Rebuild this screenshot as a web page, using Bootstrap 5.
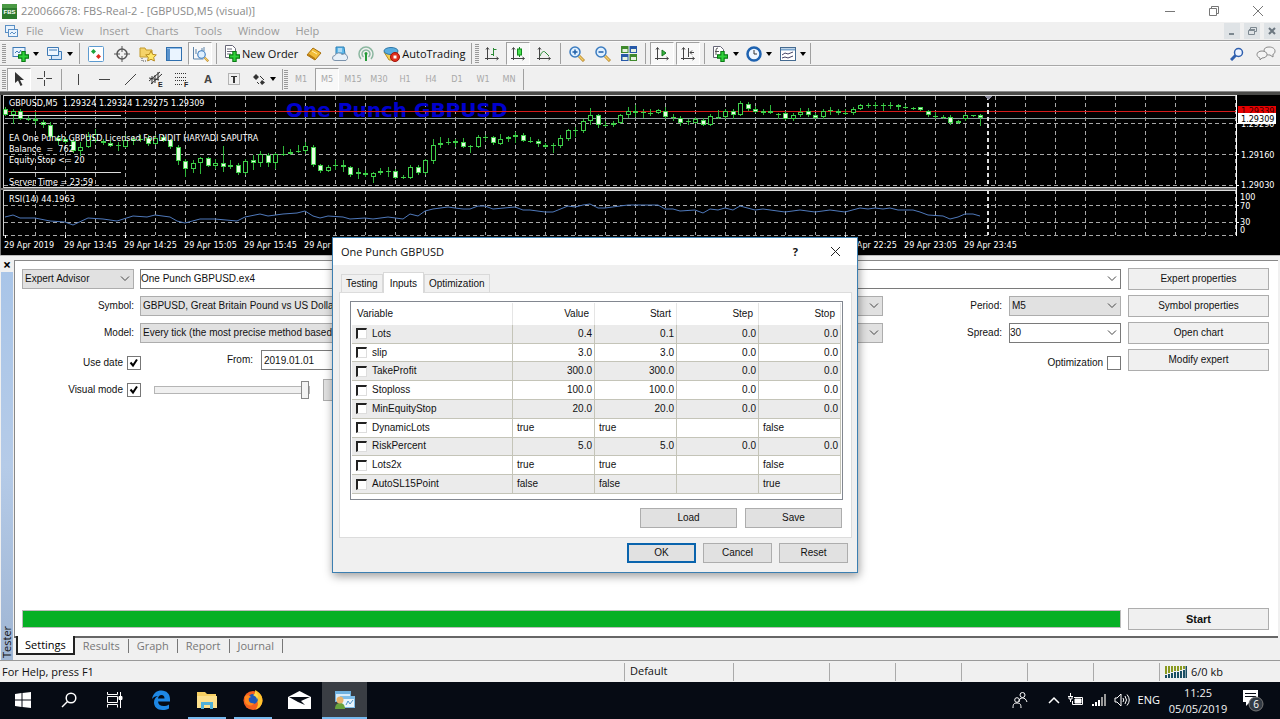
<!DOCTYPE html>
<html lang="en">
<head>
<meta charset="utf-8">
<meta name="viewport" content="width=device-width, initial-scale=1">
<title>FBS-Real-2 - GBPUSD,M5</title>
<link href="https://cdn.jsdelivr.net/npm/bootstrap@5.3.0/dist/css/bootstrap.min.css" rel="stylesheet">
<style>
:root{--ui:"Open Sans","Noto Sans",sans-serif;--form:"Liberation Sans",Arial,sans-serif}
body{font-family:var(--ui);font-size:11px;line-height:16px;color:#111;background:#f0f0f0;min-height:100vh;overflow:hidden}
button,select,input{font:inherit;color:inherit}
button{border:0;background:none;padding:0}
svg{display:block;flex:none}
.gap-s{gap:5px}
.gap-m{gap:6px}
.gap-l{gap:7px}
.shrinkable{min-width:0}
.titlebar{height:22px;background:#fff;color:#8a8a8a;padding-left:2px}
.menubar{height:19px;border-bottom:1px solid #a0a0a0}
.menubar a{color:#9a9a9a;text-decoration:none;padding:0 8px}
.mdi button{width:16px;height:16px;background:#dfe3e6;color:#7d8890}
.toolrow{height:25px;border-bottom:1px solid #a8a8a8;border-top:1px solid #fafafa}
.toolrow.last{height:26px;border-bottom:1px solid #8a8a8a}
.tool{width:26px;height:23px;display:flex;align-items:center;justify-content:center;flex:none}
.tool.drop{width:34px;gap:4px}
.tool.drop::after{content:"";border:3px solid transparent;border-top:4px solid #000;border-bottom:0}
.tool.wide{width:auto;gap:2px;padding:0 3px 0 4px}
.tool.letter{font-weight:700;color:#444}
.tool.on{width:24px;margin:0 1px;background:#f8f8f8;border:1px solid #a0a0a0;border-right-color:#fff;border-bottom-color:#fff}
.rule{width:1px;height:21px;background:#a0a0a0;margin:0 3px;flex:none}
.grip{width:4px;height:19px;margin:0 2px;flex:none;background:repeating-linear-gradient(#999 0 1px,#f0f0f0 1px 2px)}
.rule.tight{margin:0 1px}
.rule+.grip{margin:0}
.period{color:#a8a8a8;font-size:9px;font-family:"DejaVu Sans Condensed","DejaVu Sans",sans-serif}
.chart{height:164px;background:#000;border-bottom:1px solid #bbb}
.chart text{font-family:"DejaVu Sans Condensed","DejaVu Sans",sans-serif;font-size:9px;fill:#fff}
.chart .ea-name{font-family:"DejaVu Sans",sans-serif;font-weight:700;font-size:20px;fill:#0000cd}
.chart .on-red{fill:#300}
.chart .on-white{fill:#000}
.side{width:14px;padding:2px 1px 0}
.side .closer{height:14px;font-weight:700;font-size:14px;line-height:12px;color:#000}
.side .strip{background:linear-gradient(#9fb5d3,#b5cbe8 50%,#a9c5e8);writing-mode:vertical-rl;transform:rotate(180deg);line-height:12px;padding-top:2px;font-size:11px}
.pane{background:#fff;border-top:1px solid #888;border-left:1px solid #888;margin:4px 2px 0 0;padding:7px 9px 6px 7px;font-family:var(--form);font-size:10px}
.pane label{white-space:nowrap}
.pane-row{height:22px}
.pane-row.low,.pane-row .low{padding-top:5px}
.pane select,.pane .date{height:20px;border:1px solid #7a7a7a;border-radius:0;padding:0 2px;min-width:0}
.pane select{appearance:none;border-color:#adadad;background:#e1e1e1 url("data:image/svg+xml,%3Csvg xmlns='http://www.w3.org/2000/svg' width='10' height='6'%3E%3Cpath d='M1 .5l4 4 4-4' fill='none' stroke='%23444'/%3E%3C/svg%3E") no-repeat right 3px center}
.pane select.edit{border-color:#7a7a7a;background-color:#fff;padding-left:0}
.w-lab{width:112px;flex:none}
.w-check{width:119px}
.w-right{width:238px;margin-left:-6px;flex:none}
.date{width:90px}
.tick{appearance:none;width:14px;height:14px;border:1px solid #777;background:#fff;margin:0;flex:none}
.tick:checked{background:#fff url("data:image/svg+xml,%3Csvg xmlns='http://www.w3.org/2000/svg' width='12' height='12'%3E%3Cpath d='M2.500 5.500l2.500 3 4-6' fill='none' stroke='%23000' stroke-width='2'/%3E%3C/svg%3E") center no-repeat}
.speed{appearance:none;width:156px;height:20px;background:none;margin:0 13px}
.speed::-webkit-slider-runnable-track{height:8px;border:1px solid #b5b5b5;background:#f0f0f0}
.speed::-webkit-slider-thumb{appearance:none;width:8px;height:18px;margin-top:-6px;background:#f4f4f4;border:1px solid #888}
.push{height:22px;border:1px solid #adadad;background:#f0f0f0;text-align:center}
.push.pause{width:40px;flex:none;background:#e1e1e1}
.pushes{width:141px}
.progress{--bs-progress-height:18px;--bs-progress-border-radius:0;--bs-progress-bg:#e6e6e6;--bs-progress-bar-bg:#06b025;border:1px solid #bcbcbc}
.start{font-weight:700;font-size:11px}
.tabs{border-top:2px solid #666;height:24px;margin-right:2px}
.tabs button{color:#777;height:14px;padding:0 8px;line-height:12px;border-right:1px solid #777;margin-top:1px}
.tabs button.sel{background:#fff;color:#000;height:19px;line-height:18px;border:2px solid #222;border-top:0;margin:-2px 0 0 2px;padding:0 7px}
.statusbar{height:22px;border-top:1px solid #999}
.statusbar .hint{padding-left:2px;width:0}
.statusbar .cell{height:18px;border-left:1px solid #aaa;padding-left:5px;flex:none;white-space:nowrap;width:66px}
.statusbar .profile{width:109px}
.statusbar .when{width:96px}
.statusbar .traffic{width:121px;gap:4px}
.taskbar{height:37px;background:#060b14;color:#f2f2f2}
.taskbar button{height:37px;width:46px;display:flex;align-items:center;justify-content:center;flex:none;color:#fff;border-bottom:2px solid transparent}
.taskbar button.run{width:38px;margin:0 4px;border-color:#76b9ed}
.taskbar button.cur{width:45px;background:#3a3e44;border-color:#76b9ed}
.taskbar .tray button{width:auto}
.clock{width:68px;line-height:16px;text-align:center}
.dialog{position:absolute;left:332px;top:237px;width:526px;background:#f0f0f0;border:1px solid #3c7fb1;box-shadow:1px 3px 9px rgba(0,0,0,.4);font-family:var(--form);font-size:10px;z-index:5}
.dlg-title{height:27px;background:#fff;font-family:var(--ui);font-size:11px;padding:0 16px 0 8px}
.dlg-tabs{padding:7px 0 0 8px}
.dlg-tabs button{height:18px;border:1px solid #d9d9d9;border-bottom:0;padding:0 4px;line-height:16px}
.dlg-tabs button.sel{height:21px;background:#fff;margin-bottom:-1px;padding:0 6px;line-height:19px}
.sheet{margin:0 5px 0 6px;background:#fff;border:1px solid #dcdcdc;padding:8px 8px 9px 10px}
.sheet .files{margin-top:8px;padding-right:1px}
.gridbox{border:1px solid #828790;padding:1px 1px 5px;height:199px}
.vars{width:100%;height:191px;table-layout:fixed;border-collapse:collapse;line-height:14px}
.vars .c-num{width:82px}
.vars th{font-weight:400;height:22px;text-align:right;padding:0 5px;border-right:1px solid #e5e5e5}
.vars td{border-right:1px solid #c4c4b8;border-bottom:1px solid #c4c4b8;padding:0 3px 0 4px}
.vars tbody tr:nth-child(odd){background:#ebebeb}
.vars .num{text-align:right;padding-right:2px}
.vars .opt{appearance:none;width:11px;height:11px;margin:0;border:1px solid #ddd;border-top:2px solid #222;border-left:2px solid #222;background:#fff}
.dialog .push{height:20px;background:#e1e1e1;line-height:18px;width:69px}
.dialog .files .push{width:97px}
.dialog .push.ok{border:2px solid #0a64ad;line-height:16px}
.dlg-foot{padding:5px 9px 9px}
</style>
</head>
<body class="d-flex flex-column">

<svg width="0" height="0" class="position-absolute" aria-hidden="true">
 <defs>
  <symbol id="plus" viewBox="0 0 10 10"><path d="M3.500.5h3v3h3v3h-3v3h-3v-3h-3v-3h3z" fill="#2fd23a" stroke="#0a7a14"/></symbol>
  <symbol id="axes" viewBox="0 0 16 16"><path d="M3.500 2v12M1 12.500h13M2 3.500l1.500-2 1.500 2M12.500 11l2 1.500-2 1.500" fill="none" stroke="#444"/></symbol>
  <symbol id="lens" viewBox="0 0 16 16"><path d="M10 10l5 5" stroke="#b8862b" stroke-width="3"/><path d="M10 10l4.500 4.500" stroke="#f3cf6b" stroke-width="1.500"/><circle cx="6" cy="6" r="5" fill="#dff0ff" stroke="#3c7cc0" stroke-width="1.500"/></symbol>
 </defs>
</svg>

<header class="titlebar d-flex align-items-center">
 <svg class="me-1" width="15" height="15" viewBox="0 0 15 15"><rect width="15" height="15" fill="#2c7a2e"/><path d="M0 0h15v4H0z" fill="#4b9a45"/><text x="7.500" y="10" font-size="6" font-weight="700" fill="#fff" text-anchor="middle" font-family="Liberation Sans">FBS</text></svg>
 <span>220066678: FBS-Real-2 - [GBPUSD,M5 (visual)]</span>
 <div class="ms-auto d-flex gap-4 align-items-center pe-3">
  <button aria-label="Minimize" class="me-2"><svg width="12" height="12"><path d="M1 6.500h10" stroke="#777"/></svg></button>
  <button aria-label="Restore" class="me-2"><svg width="12" height="12" fill="none" stroke="#777"><path d="M1.500 3.500h7v7h-7zM3.500 3.500v-2h7v7h-2"/></svg></button>
  <button aria-label="Close"><svg width="12" height="12"><path d="M1 1l10 10M11 1L1 11" stroke="#777"/></svg></button>
 </div>
</header>

<nav class="menubar d-flex align-items-center">
 <svg class="ms-1 me-1" width="14" height="14" fill="#e9f3fd" stroke="#5a8fc4"><rect x="1.500" y="1.500" width="9" height="7"/><rect x="4.500" y="5.500" width="9" height="7"/><path d="M6 10l2-2 2 2 2-2" fill="none"/></svg>
 <a href="#" class="ps-1">File</a><a href="#">View</a><a href="#">Insert</a><a href="#">Charts</a><a href="#">Tools</a><a href="#">Window</a><a href="#">Help</a>
 <div class="mdi ms-auto d-flex gap-1">
  <button aria-label="Minimize chart"><svg width="16" height="16"><path d="M5 11h5" stroke="#7d8890" stroke-width="2"/></svg></button>
  <button aria-label="Restore chart"><svg width="16" height="16" fill="none" stroke="#7d8890"><path d="M4.500 7.500h6v4h-6zM6.500 6V4.500h6v4H11M5 6.500h6"/></svg></button>
  <button aria-label="Close chart"><svg width="16" height="16"><path d="M5 5l6 6M11 5l-6 6" stroke="#6c7780" stroke-width="2"/></svg></button>
 </div>
</nav>

<div class="toolrow d-flex align-items-center" role="toolbar" aria-label="Standard">
 <span class="grip"></span>
 <button class="tool drop" aria-label="New chart"><svg width="17" height="16"><rect x="1" y="1.500" width="12" height="9" fill="#eaf4ff" stroke="#3e7ab5"/><path d="M3 7l2-2 2 2 2-3" fill="none" stroke="#3e7ab5"/><use href="#plus" x="6" y="5" width="11" height="11"/></svg></button>
 <button class="tool drop" aria-label="Profiles"><svg width="17" height="16" fill="#d5e7fa" stroke="#3e7ab5"><path d="M5.500 5.500h10v8h-10z"/><path d="M1.500 1.500h11v8h-11z" fill="#eef6ff"/><path d="M3 4h8M3 13.500h9"/></svg></button>
 <span class="rule"></span>
 <button class="tool" aria-label="Market Watch"><svg width="16" height="16"><rect x=".5" y=".5" width="15" height="15" rx="1" fill="#fff" stroke="#5d9bd0"/><path d="M5.500 3l2.500 2.500L5.500 8 3 5.500z" fill="#1ca33a"/><path d="M10.500 8l2.500 2.500-2.500 2.500L8 10.500z" fill="#e02b1d"/></svg></button>
 <button class="tool" aria-label="Data Window"><svg width="16" height="16" fill="none" stroke="#555"><circle cx="8" cy="8" r="5" stroke-width="1.500"/><path d="M8 0v6M8 10v6M0 8h6M10 8h6"/></svg></button>
 <button class="tool" aria-label="Navigator"><svg width="18" height="16"><path d="M1 2h5l1 2h6v7H1z" fill="#f5d36a" stroke="#c39a2b"/><path d="M3 12v3h4" fill="none" stroke="#555" stroke-dasharray="1 1"/><path d="M12 5l1.700 3.400 3.600.5-2.600 2.500.7 3.600L12 13.300 8.600 15l.7-3.600-2.600-2.500 3.600-.5z" fill="#ffe768" stroke="#b88a1e"/></svg></button>
 <button class="tool" aria-label="Terminal"><svg width="16" height="14"><rect x=".5" y=".5" width="15" height="13" fill="#eaf4ff" stroke="#2f6fae"/><path d="M1 1h14v1H1z" fill="#8dbbe8"/><path d="M1 2h3v11H1z" fill="#5b93cc"/></svg></button>
 <button class="tool on" aria-label="Strategy Tester"><svg width="17" height="16"><path d="M1.500 1v12h10M4 8V3M7 10V5M10 7V2M12 5V1" fill="none" stroke="#5d83a8"/><use href="#lens" x="5" y="4" width="12" height="12"/></svg></button>
 <span class="rule"></span>
 <button class="tool wide"><svg width="16" height="17"><path d="M1.500.5h7l3 3v9h-10z" fill="#fff" stroke="#667"/><path d="M3 4h5M3 6.500h6M3 9h4" stroke="#667"/><use href="#plus" x="5" y="6" width="11" height="11"/></svg>New Order</button>
 <button class="tool" aria-label="MetaEditor"><svg width="16" height="14"><path d="M1 8l6-7 8 5-6 7z" fill="#f2bd3a" stroke="#a8700f"/><path d="M1 8l8 5v-2L3 7z" fill="#b87b12"/><path d="M6 4l5 3" stroke="#fff0b0"/></svg></button>
 <button class="tool" aria-label="VPS"><svg width="16" height="16"><path d="M4 1h8l1 7H4z" fill="#5fb8ea" stroke="#2a7fb5"/><path d="M6 3h4M6 5h4" stroke="#fff"/><path d="M3 14.500a2.500 2.500 0 010-5 4 4 0 017-1 3 3 0 014 6z" fill="#e8f0f8" stroke="#7c93ac"/></svg></button>
 <button class="tool" aria-label="Signals"><svg width="16" height="16" fill="none" stroke-width="1.500"><path d="M5.500 11a4 4 0 115 0M3 13a7 7 0 1110 0" stroke="#8cb7a0"/><path d="M8 8v7" stroke="#259a38" stroke-width="2"/><circle cx="8" cy="7.500" r="1.500" fill="#259a38"/></svg></button>
 <button class="tool wide"><svg width="17" height="16"><path d="M1 6h14l-6 8H6z" fill="#f4cf55" stroke="#b98e1d"/><ellipse cx="8" cy="5" rx="7" ry="3.500" fill="#5aaee0" stroke="#2d77a8"/><circle cx="12" cy="11" r="4.500" fill="#e0301e" stroke="#a01208"/><path d="M10.500 9.500h3v3h-3z" fill="#fff"/></svg>AutoTrading</button>
 <span class="rule"></span>
 <span class="grip"></span>
 <button class="tool" aria-label="Bar chart"><svg width="16" height="16"><use href="#axes"/><path d="M9.500 2v8M9.500 3.500h3M7 8.500h2" stroke="#2a8a35"/></svg></button>
 <button class="tool on" aria-label="Candlesticks"><svg width="16" height="16"><use href="#axes"/><path d="M9.500 1v10" stroke="#128a1f"/><rect x="7.500" y="3" width="4" height="6" fill="#4ae04f" stroke="#128a1f"/></svg></button>
 <button class="tool" aria-label="Line chart"><svg width="16" height="16"><use href="#axes"/><path d="M4 10c2-5 4-5 5-4l4 4" fill="none" stroke="#2a8a35"/></svg></button>
 <span class="rule"></span>
 <button class="tool" aria-label="Zoom in"><svg width="16" height="16"><use href="#lens"/><path d="M6 3.500v5M3.500 6h5" stroke="#1e5ea8" stroke-width="1.500"/></svg></button>
 <button class="tool" aria-label="Zoom out"><svg width="16" height="16"><use href="#lens"/><path d="M3.500 6h5" stroke="#1e5ea8" stroke-width="1.500"/></svg></button>
 <button class="tool" aria-label="Tile windows"><svg width="16" height="15"><path d="M0 0h7.500v7H0zM8.500 8H16v7H8.500z" fill="#3f8a2c"/><path d="M8.500 0H16v7H8.500zM0 8h7.500v7H0z" fill="#2759a8"/><path d="M1.500 3h5v3h-5zM10 3h5v3h-5zM1.500 11h5v3h-5zM10 11h5v3h-5z" fill="#e6f2e0"/></svg></button>
 <span class="rule"></span>
 <button class="tool on" aria-label="Auto scroll"><svg width="16" height="16"><use href="#axes"/><path d="M8 4l4 3-4 3z" fill="#34b53e" stroke="#16751f"/></svg></button>
 <button class="tool on" aria-label="Chart shift"><svg width="16" height="16"><use href="#axes"/><path d="M8.500 2v9M14 6.500h-4M12 4.500l-2 2 2 2" fill="none" stroke="#444"/></svg></button>
 <span class="rule"></span>
 <button class="tool drop" aria-label="Indicators"><svg width="17" height="17"><path d="M1.500 1.500h7l3 3v8h-10z" fill="#fff" stroke="#667"/><path d="M4 10V5q0-2 2-2M3 6.500h4" fill="none" stroke="#555"/><use href="#plus" x="5" y="6" width="11" height="11"/></svg></button>
 <button class="tool drop" aria-label="Periods"><svg width="16" height="16"><circle cx="8" cy="8" r="6.500" fill="#eef6ff" stroke="#1e62b0" stroke-width="2.500"/><path d="M8 4v4h3" fill="none" stroke="#333"/></svg></button>
 <button class="tool drop" aria-label="Templates"><svg width="16" height="14" fill="none"><rect x=".5" y=".5" width="15" height="13" fill="#fff" stroke="#446a90"/><path d="M1 2.500h14" stroke="#7ba6cf" stroke-width="2"/><path d="M2 8l3-2 3 1 5-2M2 11l3-1 3 1 5-2" stroke="#446"/></svg></button>
 <span class="rule m-0"></span>
 <div class="ms-auto d-flex align-items-center gap-2 pe-1">
  <button aria-label="Search" class="me-1"><svg width="14" height="14"><path d="M1 13l5-5" stroke="#2f5fae" stroke-width="3"/><circle cx="8.500" cy="5.500" r="4" fill="#eef4ff" stroke="#2f5fae" stroke-width="1.500"/></svg></button>
  <button aria-label="Chat"><svg width="20" height="15" fill="#f4f4f4" stroke="#888"><path d="M13 1c4 0 6 2 6 4s-1 3-2 3v3l-3-2c-4 0-6-1-6-4s2-4 5-4z"/><path d="M6 5c3 0 5 1.500 5 3.500S9 12 6 12l-2 2v-2C2 11.500 1 10 1 8.500 1 6.500 3 5 6 5z"/></svg></button>
 </div>
</div>

<div class="toolrow last d-flex align-items-center" role="toolbar" aria-label="Line studies">
 <span class="grip me-0"></span>
 <button class="tool on" aria-label="Cursor"><svg width="12" height="14"><path d="M2 0v11l3-2.500L7.500 14l2-1L7 8h4z" fill="#333"/></svg></button>
 <button class="tool" aria-label="Crosshair"><svg width="16" height="16"><path d="M7.500 0v6M7.500 9v6M0 7.500h6M9 7.500h6" stroke="#444"/></svg></button>
 <span class="rule"></span>
 <button class="tool" aria-label="Vertical line"><svg width="13" height="13"><path d="M6.500 1v11" stroke="#444"/></svg></button>
 <button class="tool" aria-label="Horizontal line"><svg width="13" height="13"><path d="M1 6.500h11" stroke="#444"/></svg></button>
 <button class="tool" aria-label="Trendline"><svg width="13" height="13"><path d="M1 12L12 1" stroke="#444"/></svg></button>
 <button class="tool" aria-label="Equidistant channel"><svg width="17" height="17"><path d="M1 10L12 1M3 13L14 3M4 5v8M7 4v8M10 1v8M1 7l10 2" fill="none" stroke="#333"/><text x="10" y="16" font-size="7" font-weight="700" font-family="Liberation Sans" fill="#222">E</text></svg></button>
 <button class="tool" aria-label="Fibonacci"><svg width="16" height="17"><path d="M1 2.500h12M1 6.500h12M1 9.500h12M1 13.500h8" stroke="#333" stroke-dasharray="1 1"/><text x="10" y="16" font-size="7" font-weight="700" font-family="Liberation Sans" fill="#222">F</text></svg></button>
 <button class="tool letter">A</button>
 <button class="tool" aria-label="Text label"><svg width="14" height="14" fill="none"><rect x="1.500" y="1.500" width="11" height="11" stroke="#777" stroke-dasharray="1 1"/><path d="M4 4.500h6" stroke="#333"/><path d="M7 4v7" stroke="#333" stroke-width="2"/></svg></button>
 <button class="tool drop" aria-label="Arrows"><svg width="14" height="14"><path d="M4 2l3 3-3 3-3-3zM10 8l3 2.500-3 2.500-2-2.500z" fill="#333"/><path d="M5 10l2 2M8 4l4 4" stroke="#333"/></svg></button>
 <span class="rule tight"></span>
 <span class="grip"></span>
 <button class="tool period">M1</button><button class="tool on period">M5</button><button class="tool period">M15</button><button class="tool period">M30</button><button class="tool period">H1</button><button class="tool period">H4</button><button class="tool period">D1</button><button class="tool period">W1</button><button class="tool period">MN</button>
 <span class="rule tight"></span>
</div>

<section class="chart d-flex" aria-label="GBPUSD chart">
 <div class="flex-fill overflow-hidden">
  <svg id="plot" width="100%" height="163" shape-rendering="crispEdges"></svg>
 </div>
 <svg width="44" height="163" shape-rendering="crispEdges">
  <path d="M0 0h44v3H0z" fill="#4a4a48"/>
  <path d="M.5 3v141M0 31.500h3M0 62.500h3M0 93.500h3M0 113.500h3M0 130.500h3" stroke="#fff"/>
  <text x="5" y="35">1.29290</text>
  <rect x="2" y="14" width="38" height="10" fill="#e60000"/><text class="on-red" x="5" y="22">1.29339</text>
  <rect x="2" y="21" width="38" height="11" fill="#fff"/><text class="on-white" x="5" y="30">1.29309</text>
  <text x="5" y="66">1.29160</text><text x="5" y="96">1.29030</text>
  <text x="4" y="108">100</text><text x="4" y="117">70</text><text x="4" y="133">30</text><text x="4" y="141">0</text>
 </svg>
</section>

<main class="d-flex flex-fill">
 <aside class="side d-flex flex-column">
  <button class="closer" aria-label="Close tester">×</button>
  <div class="strip flex-fill">Tester</div>
 </aside>
 <div class="flex-fill d-flex flex-column shrinkable">
  <form class="pane flex-fill d-flex flex-column" onsubmit="return false">
   <div class="d-flex gap-l">
    <div class="flex-fill d-flex flex-column gap-s shrinkable">
     <div class="pane-row d-flex align-items-center gap-m">
      <select class="w-lab" aria-label="Tester type"><option>Expert Advisor</option></select>
      <select class="edit flex-fill" aria-label="Expert"><option>One Punch GBPUSD.ex4</option></select>
     </div>
     <div class="pane-row d-flex align-items-center gap-m">
      <label class="w-lab text-end" for="sym">Symbol:</label>
      <select class="flex-fill" id="sym"><option>GBPUSD, Great Britain Pound vs US Dollar</option></select>
      <div class="w-right d-flex align-items-center justify-content-end gap-l"><label for="per">Period:</label><select class="w-lab" id="per"><option>M5</option></select></div>
     </div>
     <div class="pane-row d-flex align-items-center gap-m">
      <label class="w-lab text-end" for="mod">Model:</label>
      <select class="flex-fill" id="mod"><option>Every tick (the most precise method based on all available least timeframes)</option></select>
      <div class="w-right d-flex align-items-center justify-content-end gap-l"><label for="spr">Spread:</label><select class="w-lab edit" id="spr"><option>30</option></select></div>
     </div>
     <div class="pane-row d-flex align-items-center">
      <div class="w-check low d-flex align-items-center justify-content-end gap-1"><label for="ud">Use date</label><input class="tick" type="checkbox" id="ud" checked></div>
      <label for="from" class="w-lab text-end">From:</label>
      <input class="date ms-2" id="from" value="2019.01.01">
      <div class="low ms-auto d-flex align-items-center gap-1"><label for="opt">Optimization</label><input class="tick" type="checkbox" id="opt"></div>
     </div>
     <div class="pane-row low d-flex align-items-center">
      <div class="w-check d-flex align-items-center justify-content-end gap-1"><label for="vm">Visual mode</label><input class="tick" type="checkbox" id="vm" checked></div>
      <input class="speed" type="range" value="100" aria-label="Speed">
      <button class="push pause" aria-label="Pause"><svg width="14" height="10" class="ms-2"><path d="M0 0h4v10H0zM7 0h4v10H7z" fill="#999"/></svg></button>
     </div>
    </div>
    <div class="pushes d-flex flex-column gap-s">
     <button class="push">Expert properties</button><button class="push">Symbol properties</button><button class="push">Open chart</button><button class="push">Modify expert</button>
    </div>
   </div>
   <div class="d-flex mt-auto align-items-center gap-l">
    <div class="progress flex-fill" role="progressbar" aria-label="Test progress" aria-valuenow="100"><div class="progress-bar w-100"></div></div>
    <button class="push pushes start">Start</button>
   </div>
  </form>
  <div class="tabs d-flex align-items-start" role="tablist">
   <button class="sel">Settings</button><button>Results</button><button>Graph</button><button>Report</button><button>Journal</button>
  </div>
 </div>
</main>

<footer class="statusbar d-flex align-items-center">
 <span class="hint flex-fill">For Help, press F1</span>
 <div class="cell profile">Default</div><div class="cell when"></div><div class="cell"></div><div class="cell"></div><div class="cell"></div><div class="cell"></div><div class="cell"></div>
 <div class="cell traffic d-flex align-items-center"><svg width="22" height="12"><path d="M1 0v8M4 0v7M7 0v6M10 0v5M13 0v5M16 0v4M19 0v3" stroke="#8a9a20" stroke-width="2"/><path d="M1 9v3M4 8v4M7 7v5M10 6v6M13 6v6M16 5v7M19 4v8M21.500 0v12" stroke="#1b4f63" stroke-width="2"/></svg>6/0 kb</div>
</footer>

<nav class="taskbar d-flex" aria-label="Taskbar">
 <button aria-label="Start menu"><svg width="16" height="16"><path d="M0 2l6.500-1v6.500H0zM7.500 1L16 0v7.500H7.500zM0 8.500h6.500V15L0 14zM7.500 8.500H16V16l-8.500-1z" fill="#fff"/></svg></button>
 <button aria-label="Search Windows"><svg width="16" height="16" fill="none" stroke="#fff" stroke-width="1.500"><circle cx="10" cy="6" r="4.800"/><path d="M6.500 9.500L1 15"/></svg></button>
 <button aria-label="Task view"><svg width="16" height="16" fill="none" stroke="#fff"><path d="M.5 0v2.500h10V0M.5 4.500h10v6H.5zM.5 15.500v-3h10v3M13.500 0v4M13.500 8v8"/><path d="M12 4.500h3v3h-3z" fill="#fff"/></svg></button>
 <button aria-label="Edge"><svg width="20" height="20"><path d="M1 9C2 3 6 .5 10.500.5c5 0 8.500 3.500 8.500 8.500v2.500H7c.2 3 2.500 4.500 5.500 4.500 2 0 4-.5 5.500-1.500v4c-2 1-4 1.500-6.500 1.500C6 20 3 16.500 3 12.500c0-3 1.500-5.500 4-6.500C4.500 6 2.500 7 1 9zm6-.5h6.500c0-2-1-3.500-3-3.500S7.300 6.500 7 8.500z" fill="#1e88e5"/></svg></button>
 <button class="run" aria-label="File Explorer"><svg width="22" height="18"><path d="M1 1h8l2 2h9v13H1z" fill="#f6cf62"/><path d="M1 5h20v12H1z" fill="#fce08c"/><path d="M5 18v-7h12v7h-3v-4H8v4z" fill="#4fb0d8"/></svg></button>
 <button class="run" aria-label="Firefox"><svg width="20" height="20"><circle cx="10" cy="10.500" r="9.500" fill="#f4601f"/><path d="M12 0c4 2 7.500 5 7.500 10.500 0 4-3 8-7 9 3-3 3-7 1-10z" fill="#ffc42e"/><circle cx="10" cy="9" r="5" fill="#1d58b8"/><path d="M2 6c2-1 4-1 6 1l-2 1c-1 3 1 6 5 5-2 4-7 3-9-1z" fill="#ff8a1e"/><path d="M12 1c3 3 4 6 2 9 0-3-2-4-4-5 2-1 2-2 2-4z" fill="#ffd94a"/></svg></button>
 <button aria-label="Mail"><svg width="23" height="18"><path d="M0 6l11.500-6L23 6v12H0z" fill="#fff"/><path d="M1 6h21l-9 4 4 4-7-3z" fill="#060b14"/></svg></button>
 <button class="cur" aria-label="MetaTrader"><svg width="22" height="20"><path d="M1 1h16v11H1z" fill="#6eb1e0"/><path d="M2 4h14v7H2z" fill="#d8ecfa"/><path d="M6 6h15v12H6z" fill="#7fbde8"/><path d="M8 9h12v8H8z" fill="#e8f5fd"/><path d="M12 15l2-4 2 3 3-4" fill="none" stroke="#4f93c8"/><path d="M1 19c0-4 2-6 5-6s5 2 5 6z" fill="#68a23c"/><circle cx="6" cy="10" r="3.500" fill="#e9b26a"/></svg></button>
 <div class="tray ms-auto d-flex align-items-center">
  <button aria-label="People" class="me-3"><svg width="16" height="18" fill="none" stroke="#fff"><circle cx="10.500" cy="4" r="2.500"/><path d="M7 11c0-3 1.500-4 3.500-4S14 8 15 11"/><circle cx="5" cy="9" r="2.300"/><path d="M1 17c0-4 1-5 4-5s4 1 4 5"/></svg></button>
  <button aria-label="Hidden icons" class="ms-1 me-2"><svg width="12" height="8"><path d="M1 7l5-5 5 5" fill="none" stroke="#fff" stroke-width="1.500"/></svg></button>
  <button aria-label="Battery" class="me-2"><svg width="16" height="14" fill="none" stroke="#fff"><path d="M6 4.500h8.500v7h-10V8M2.500 0v3M0 3.500h5M1 4v2h3V4M2.500 6v3"/><path d="M7 6h6v4H7z" fill="#fff"/></svg></button>
  <button aria-label="Network" class="me-2"><svg width="14" height="14"><path d="M1 13v-2M4 13V9M7 13V7" stroke="#fff" stroke-width="2"/><path d="M10 13V4M13 13V1" stroke="#999" stroke-width="2"/></svg></button>
  <button aria-label="Volume" class="me-2"><svg width="16" height="14" fill="none" stroke="#fff"><path d="M1 5h2l4-4v12L3 9H1zM9 5q1.500 2 0 4M11 3q3 4 0 8M13 1.500q4.500 5.500 0 11"/></svg></button>
  <button>ENG</button>
  <div class="clock ms-1">11:25<br>05/05/2019</div>
  <button aria-label="Notifications" class="ms-2 me-3"><svg width="24" height="24"><path d="M3 2h15v12h-8l-4 4v-4H3z" fill="#fff"/><path d="M5 5.500h11M5 8.500h11" stroke="#060b14"/><circle cx="16" cy="16" r="7" fill="#333b44" stroke="#777"/><text x="16" y="20" text-anchor="middle" font-size="10" fill="#fff">6</text></svg></button>
 </div>
</nav>

<div class="dialog" role="dialog" aria-labelledby="dlgname">
 <div class="dlg-title d-flex align-items-center">
  <span id="dlgname">One Punch GBPUSD</span>
  <button class="ms-auto me-4 fw-bold" aria-label="Help">?</button>
  <button class="ms-2" aria-label="Close dialog"><svg width="11" height="11"><path d="M1 1l9 9M10 1l-9 9" stroke="#222"/></svg></button>
 </div>
 <div class="dlg-tabs d-flex align-items-end" role="tablist"><button>Testing</button><button class="sel">Inputs</button><button>Optimization</button></div>
 <div class="sheet">
  <div class="gridbox">
   <table class="vars">
    <colgroup><col><col class="c-num"><col class="c-num"><col class="c-num"><col class="c-num"></colgroup>
    <thead><tr><th class="text-start">Variable</th><th>Value</th><th>Start</th><th>Step</th><th>Stop</th></tr></thead>
    <tbody id="rows"></tbody>
   </table>
  </div>
  <div class="files d-flex justify-content-end gap-2"><button class="push">Load</button><button class="push">Save</button></div>
 </div>
 <div class="dlg-foot d-flex justify-content-end gap-l"><button class="push ok">OK</button><button class="push">Cancel</button><button class="push">Reset</button></div>
</div>

<script src="https://cdn.jsdelivr.net/npm/bootstrap@5.3.0/dist/js/bootstrap.bundle.min.js"></script>
<script>
// Expert inputs: name, value, start, step, stop
const inputs=[["Lots","0.4","0.1","0.0","0.0"],["slip","3.0","3.0","0.0","0.0"],["TakeProfit","300.0","300.0","0.0","0.0"],["Stoploss","100.0","100.0","0.0","0.0"],["MinEquityStop","20.0","20.0","0.0","0.0"],["DynamicLots","true","true","","false"],["RiskPercent","5.0","5.0","0.0","0.0"],["Lots2x","true","true","","false"],["AutoSL15Point","false","false","","true"]];
document.getElementById("rows").innerHTML=inputs.map((r,i)=>`<tr><td><div class="d-flex align-items-center gap-s"><input class="opt" type="checkbox" id="v${i}"><label for="v${i}">${r[0]}</label></div></td>`+r.slice(1).map(v=>`<td class="${/\d/.test(v)?"num":""}">${v}</td>`).join("")+"</tr>").join("");

// Candles: kind (f filled, h hollow, c cross), high, body top, body bottom, low; three units per pixel
const bars="f45,50,70,72 h52,56,70,95 f52,58,82,84 c70,80,86,88 f60,80,88,100 f84,90,100,108 f90,98,135,138 f130,138,146,160 f135,140,150,155 f140,146,178,182 h150,164,178,192 h120,132,164,168 h110,125,148,152 f140,148,154,158 f148,154,162,166 c150,160,162,178 h130,145,164,168 h132,142,147,158 c130,141,143,150 f130,138,156,162 h130,138,156,160 f130,136,146,150 f140,144,164,172 f160,164,206,220 f200,206,232,255 h205,214,232,242 h195,198,214,245 f194,198,222,226 h200,214,222,232 f162,212,226,240 h205,218,224,232 f212,220,242,250 h202,206,244,250 f190,204,214,235 h178,185,214,225 f184,188,214,225 h182,186,214,232 c162,187,189,192 h170,180,184,188 c160,176,178,184 h150,162,178,185 f160,164,218,225 f215,220,238,244 h220,224,236,240 c205,218,220,235 f205,220,226,240 f222,226,250,256 h228,240,246,262 f235,242,250,255 h240,244,254,272 h228,236,240,248 c225,238,240,254 f230,236,258,262 c250,256,258,262 h220,226,258,262 f218,226,244,250 h200,204,244,248 h140,158,206,215 h135,152,158,168 c138,150,152,160 h140,147,152,165 f138,150,164,168 c158,162,164,184 h130,134,164,168 c128,136,138,148 f132,136,154,158 h126,140,156,160 h132,136,142,150 h120,128,134,152 f124,128,148,150 c134,146,148,152 f140,148,156,165 f152,158,164,168 c152,160,163,182 h130,138,162,168 h110,114,142,146 c106,114,116,135 h80,86,118,122 h48,70,86,98 f66,70,98,108 c88,98,100,106 h88,92,98,106 h66,70,92,96 h45,56,70,78 f40,58,62,74 c50,60,62,78 c50,62,64,72 h50,54,62,66 f44,58,76,80 c66,76,78,88 f72,78,94,102 c80,88,90,100 h76,82,92,96 f78,84,100,102 h66,72,98,102 c54,74,78,82 h50,58,74,82 f50,58,68,82 h26,34,70,72 f30,36,52,58 f42,52,60,64 h52,58,62,68 f38,56,62,66 c64,66,68,80 f56,62,80,84 h64,68,80,86 h48,60,68,76 f48,58,68,74 f64,70,78,82 h52,58,76,80 c44,54,56,68 f50,56,62,68 c52,63,65,70 h46,52,64,70 h36,40,50,54 c32,40,42,48 c30,40,42,50 c32,40,42,56 c30,38,40,50 f36,38,46,54 c40,46,48,52 c44,47,49,54 f44,46,54,56 f54,58,70,74 c60,72,74,82 c70,76,78,80 f68,74,92,98 h84,86,90,96 h66,70,80,86 c68,70,72,76 f66,68,78,102".split(" ");
const rsi="15,375 38,370 60,377 105,378 150,388 195,390 218,398 263,378 308,382 352,386 398,372 442,375 465,370 510,376 532,388 555,392 600,382 645,380 712,386 735,375 780,366 803,372 848,365 892,364 915,358 938,372 960,377 983,373 1028,375 1050,380 1096,378 1118,380 1163,375 1208,380 1230,367 1253,372 1275,358 1298,351 1343,346 1366,347 1388,352 1411,352 1433,343 1456,343 1478,352 1546,346 1568,355 1591,355 1636,361 1658,361 1703,343 1726,346 1748,338 1771,335 1793,349 1816,349 1861,343 1883,338 1973,340 1996,352 2018,350 2041,358 2086,355 2108,364 2131,352 2153,355 2176,347 2198,355 2221,343 2266,355 2288,352 2356,361 2401,354 2446,361 2491,354 2536,361 2581,349 2603,352 2626,349 2648,352 2671,349 2693,355 2738,355 2761,361 2783,370 2828,373 2851,380 2873,374 2896,366 2918,366 2941,372";
let s='<path d="M0 0h1300v3H0z" fill="#4a4a48"/><path d="M0 3h1v160H0z" fill="#777"/><path d="M3.500 3v141" stroke="#ccc"/>';
let grid="";
for(let x=35;x<1236;x+=30)grid+=`M${x}.5 4V95M${x}.5 98V143`;
for(const y of [31,62,93,113,130,143])grid+=`M4 ${y}.5H1236`;
s+=`<path d="${grid}" stroke="#a8a8a8" stroke-dasharray="4 3"/>`;
s+='<path d="M4 3.500H1236M4 95.500H1236M4 98.500H1236" stroke="#ddd"/><path d="M0 96h1236v2H0z" fill="#777"/>';
s+='<text class="ea-name" x="286" y="25">One Punch GBPUSD</text>';
s+='<path d="M5 19.500H1236" stroke="#d41a1a"/><path d="M5 26.500H1236" stroke="#8c9a9a"/>';
bars.forEach((b,i)=>{const k=b[0],[h,t,l,w]=b.slice(1).split(",").map(v=>Math.round(v/3)),x=Math.round(5+7.5*i);
 s+=`<path d="M${x}.5 ${h}V${w}" stroke="#2fb53a"/>`;
 if(k==="c")s+=`<path d="M${x-2} ${t}.5h5" stroke="#3fd04a"/>`;
 else s+=`<rect x="${x-2}.5" y="${t}.5" width="4" height="${Math.max(1,l-t-1)}" fill="${k==="f"?"#e4ffe0":"#000"}" stroke="#3fd04a"/>`;});
s+=`<polyline points="${rsi.split(" ").map(p=>p.split(",").map(v=>Math.round(v/3)).join()).join(" ")}" fill="none" stroke="#4f79bb" shape-rendering="auto"/>`;
s+='<path d="M988 4V95M988 98V143" stroke="#ddd" stroke-width="2" stroke-dasharray="4 3"/><path d="M984 4h8l-4 4z" fill="#889"/>';
s+='<path d="M9 23.500H121M9 80.500H121" stroke="#ddd"/>';
[["GBPUSD,M5  1.29324 1.29324 1.29275 1.29309",14],["EA One Punch GBPUSD Licensed For DIDIT HARYADI SAPUTRA",49],["Balance  =  762",60],["Equity Stop <= 20",71],["Server Time = 23:59",93],["RSI(14) 44.1963",110]].forEach(([t,y])=>s+=`<text x="9" y="${y}" xml:space="preserve">${t.replace("<","&lt;")}</text>`);
// Time axis: a label every 60 px (40 minutes), left out where the open dialog covers it
for(let i=0;i<17;i++){const m=13*60+5+40*i;if(i>5&&i<14)continue;
 s+=`<text x="${4+60*i}" y="156">29 Apr ${i?Math.floor(m/60)+":"+String(m%60).padStart(2,"0"):"2019"}</text><path d="M${5+60*i}.5 143v3" stroke="#fff"/>`;}
document.getElementById("plot").innerHTML=s;
</script>
</body>
</html>
